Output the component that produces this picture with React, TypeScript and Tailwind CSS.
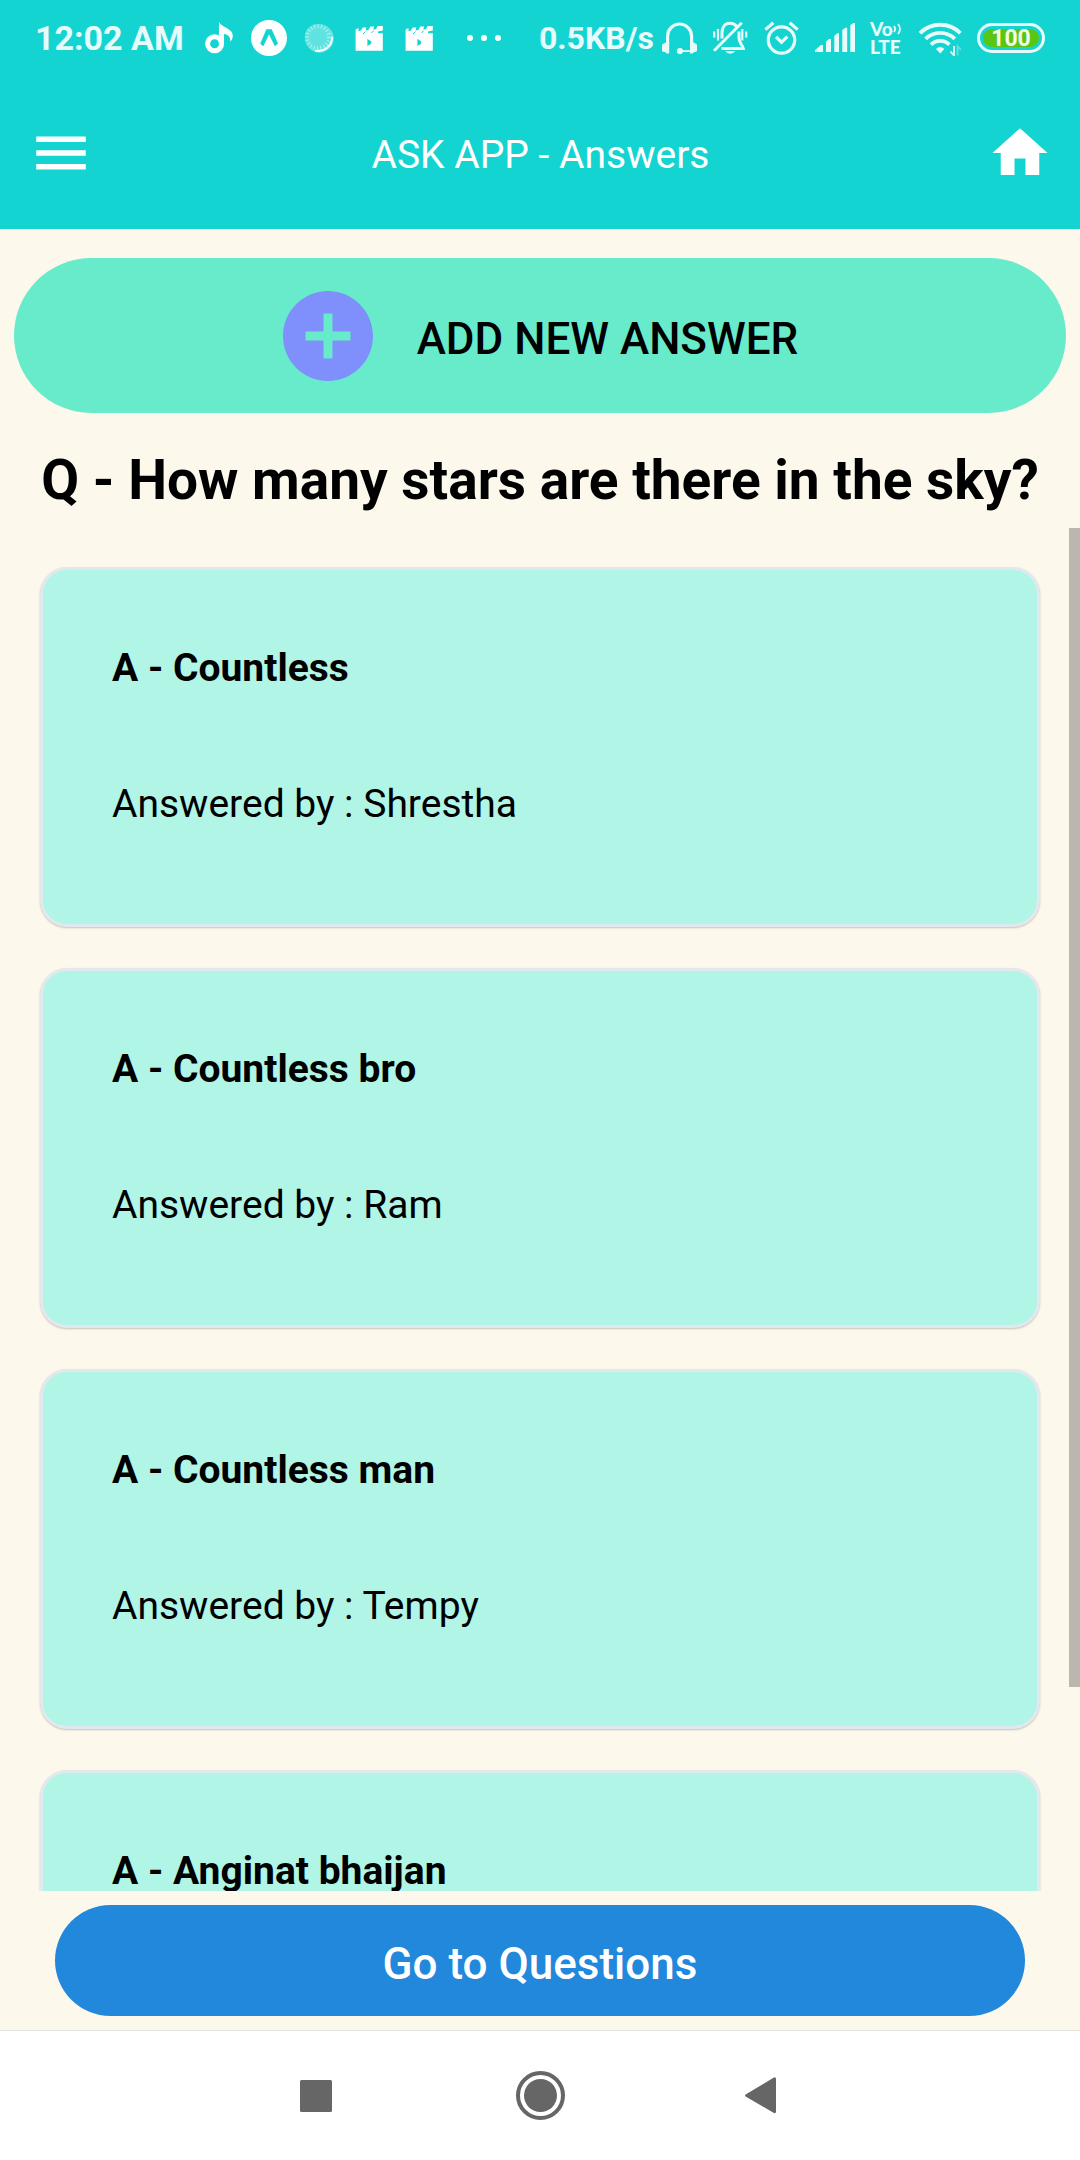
import type { ReactNode } from "react";

const answers = [
  { text: "Countless", author: "Shrestha" },
  { text: "Countless bro", author: "Ram" },
  { text: "Countless man", author: "Tempy" },
  { text: "Anginat bhaijan", author: "" },
];

function Slot({ children }: { children: ReactNode }) {
  return <span className="flex w-[50px] shrink-0 justify-center">{children}</span>;
}

function MusicNote() {
  return (
    <svg width="30" height="36" viewBox="204 20 30 36" fill="#fff" aria-hidden="true">
      <circle cx="214.6" cy="43.8" r="7" fill="none" stroke="#fff" strokeWidth="5" />
      <path d="M219 22C222 28 233 28 232.8 36C232.7 38.5 231.8 40.3 230.4 41.6C230.6 36.5 227.5 34.2 224 34V44H218.8Z" />
    </svg>
  );
}

function ExpoBadge() {
  return (
    <svg width="36" height="36" viewBox="251 20 36 36" aria-hidden="true">
      <circle cx="269" cy="38" r="18" fill="#fff" />
      <path d="M266.4 29.3H271.7L278 43.4L274.9 46.2L269 34.5L263.3 46.2L260.2 43.8Z" fill="#14d4d2" />
    </svg>
  );
}

function Moon() {
  return (
    <svg width="32" height="32" viewBox="303 22 32 32" aria-hidden="true">
      <circle cx="319.5" cy="38.5" r="14.2" fill="#fff" fillOpacity="0.4" />
      <circle cx="318" cy="37.2" r="13.2" fill="#5fe3e1" />
      <circle cx="318" cy="37.2" r="11" fill="none" stroke="#a4eeed" strokeWidth="4" strokeDasharray="1.2 2.2" />
      <path d="M332.2 37A14 14 0 0 1 315 50.6" fill="none" stroke="#fff" strokeWidth="1.8" />
    </svg>
  );
}

function Clapper() {
  return (
    <svg width="28" height="28" viewBox="355 24 28 28" aria-hidden="true">
      <path
        fill="#fff"
        fillRule="evenodd"
        d="M355.6 50.7V29.5L358.5 28V31.2L361 30.5L362.5 27.5H366.3L365.6 30.6L368.4 30L370.3 26.5H374L373.4 29.6L376 29.2L377.6 26H382.8V30.6L378 31.4V33.2H382.8V50.7ZM367.4 39V46L371.2 43.8V41.2Z"
      />
      <path d="M363 34L365.5 31.6M371.5 33L373.6 30.6" stroke="#14d4d2" strokeWidth="1" />
    </svg>
  );
}

function Headset() {
  return (
    <svg width="36" height="36" viewBox="663 20 36 36" fill="#e7fbfa" aria-hidden="true">
      <path d="M668.6 45V36a12 12 0 0 1 24 0V45" fill="none" stroke="#e7fbfa" strokeWidth="3.2" />
      <path d="M666.5 42.5H670.2V53.6H667.5L666 52H664.6Q663 52 663 50V45.5Q663 43.5 665 43.5ZM694.6 42.5H691V53.6H693.6L695.2 52H696.5Q698 52 698 50V45.5Q698 43.5 696.2 43.5Z" />
      <circle cx="681" cy="51" r="3.1" />
      <path d="M681 50.2H692V52H681Z" />
    </svg>
  );
}

function MutedBell() {
  return (
    <svg width="36" height="36" viewBox="714 20 36 36" fill="none" stroke="#e7fbfa" strokeWidth="3" aria-hidden="true">
      <path d="M723 38.5V33C723 27 726 23.3 731 23.3C734 23.3 736.4 24.6 737.8 26.6M740 31.5V38C740 42.5 743.5 45 744.3 48.6H722.5" />
      <path d="M715 50.8L742.8 22.8" />
      <path d="M715.2 31.5V37.5M719 29V40.5M743.3 29V40.5M747.2 31.5V37.5" strokeWidth="2.2" />
      <path d="M726 51H736.5Q731 56.5 726 51Z" fill="#e7fbfa" stroke="none" />
    </svg>
  );
}

function Alarm() {
  return (
    <svg width="36" height="36" viewBox="764.5 20 36 36" fill="none" stroke="#e7fbfa" strokeWidth="3.2" aria-hidden="true">
      <circle cx="782" cy="40" r="13.2" />
      <path d="M776.6 36.8L782 42.2L787.8 36.6M765.8 29.6L773.8 22.8M790.2 22.8L798.2 29.6" />
    </svg>
  );
}

function Signal() {
  return (
    <svg width="40" height="36" viewBox="815 20 40 36" fill="#e7fbfa" aria-hidden="true">
      <path d="M815 52V50L821 45H823V52ZM826 52V41.5L829 39H831V52ZM834.3 52V35.7L837.3 33.2H839V52ZM842.3 52V30L845.3 27.8H847.2V52ZM850.3 52V25.2L853.3 23H855V52Z" />
    </svg>
  );
}

function VoLte() {
  return (
    <span className="flex w-[34px] flex-col font-['Lato',sans-serif] text-[19px] leading-[18px] font-black whitespace-nowrap text-[#e7fbfa]">
      <span className="flex items-center">
        Vo
        <svg width="9" height="12" viewBox="0 0 9 12" fill="none" stroke="#e7fbfa" strokeWidth="1.8" aria-hidden="true">
          <path d="M1 3Q3.2 6 1 9M5 1Q9 6 5 11" />
        </svg>
      </span>
      <span>LTE</span>
    </span>
  );
}

function Wifi() {
  return (
    <svg width="43" height="36" viewBox="919 20 43 36" fill="none" stroke="#e7fbfa" strokeWidth="3.8" aria-hidden="true">
      <path d="M920 33.2A28.4 28.4 0 0 1 960.4 33.2M925.6 38.9A20.6 20.6 0 0 1 954.8 38.9M931 44.6A13 13 0 0 1 949.4 44.6" />
      <path d="M936 49Q940 45 944.4 49L940.2 53.4Z" fill="#e7fbfa" stroke="none" />
      <path d="M954 46V55.5L950.5 51.5" strokeWidth="1.8" />
      <path d="M957.6 55.5V46L961 50" strokeWidth="1.8" strokeOpacity="0.35" />
    </svg>
  );
}

function Battery() {
  return (
    <span className="flex h-[30px] w-[68px] rounded-full border-[3px] border-[#e7fbfa] p-[3px]">
      <span className="flex flex-1 items-center justify-center rounded-full bg-[#5ac513] text-[23px] leading-none font-bold text-[#f2fbe8]">
        100
      </span>
    </span>
  );
}

function StatusBar() {
  return (
    <div className="flex h-[76px] items-center px-[35px]">
      <span className="w-[159px] text-[34px] leading-10 font-bold whitespace-nowrap text-[#e7fbfa]">12:02 AM</span>
      <Slot><MusicNote /></Slot>
      <Slot><ExpoBadge /></Slot>
      <Slot><Moon /></Slot>
      <Slot><Clapper /></Slot>
      <Slot><Clapper /></Slot>
      <span className="ml-[23px] flex gap-2">
        <i className="size-1.5 rounded-full bg-white" />
        <i className="size-1.5 rounded-full bg-white" />
        <i className="size-1.5 rounded-full bg-white" />
      </span>
      <div className="ml-auto flex items-center gap-[15px]">
        <span className="flex items-center gap-2">
          <span className="text-[32px] leading-10 font-bold text-[#e7fbfa]">0.5KB/s</span>
          <Headset />
        </span>
        <MutedBell />
        <Alarm />
        <Signal />
        <VoLte />
        <Wifi />
        <Battery />
      </div>
    </div>
  );
}

function AnswerCard({ text, author }: { text: string; author: string }) {
  return (
    <li className="flex h-[360px] shrink-0 flex-col gap-[90px] rounded-[27px] border-[3px] border-[#e1e8ee] bg-[#b0f5e6] px-[69px] pt-[75px] shadow-[0_1px_2px_rgba(0,0,0,0.22)]">
      <h2 className="text-[39px] leading-[46px] font-bold">A - {text}</h2>
      {author && <p className="text-[39px] leading-[46px]">Answered by : {author}</p>}
    </li>
  );
}

export default function App() {
  return (
    <div className="flex h-screen flex-col bg-[#fcf8eb] font-['Roboto',sans-serif] text-black">
      <header className="shrink-0 bg-[#14d4d2] text-white">
        <StatusBar />
        <div className="flex h-[153px] items-center justify-between pr-[27px] pl-7">
          <button type="button" aria-label="Open menu">
            <svg className="size-[66px]" viewBox="0 0 24 24" fill="currentColor" aria-hidden="true">
              <path d="M3 18h18v-2H3v2zm0-5h18v-2H3v2zm0-7v2h18V6H3z" />
            </svg>
          </button>
          <h1 className="pt-1 text-[39px] leading-[46px]">ASK APP - Answers</h1>
          <button type="button" aria-label="Home">
            <svg className="size-[66px]" viewBox="0 0 24 24" fill="currentColor" aria-hidden="true">
              <path d="M10 20v-6h4v6h5v-8h3L12 3 2 12h3v8z" />
            </svg>
          </button>
        </div>
      </header>

      <main className="flex min-h-0 flex-1 flex-col">
        <button
          type="button"
          className="mx-3.5 mt-[29px] flex h-[155px] shrink-0 items-center justify-center gap-[35px] rounded-full bg-[#67ebcb] pr-2 text-[44px] font-medium"
        >
          <svg className="size-[108px]" viewBox="0 0 24 24" fill="#7f8ffb" aria-hidden="true">
            <path d="M12 2C6.48 2 2 6.48 2 12s4.48 10 10 10 10-4.48 10-10S17.52 2 12 2zm5 11h-4v4h-2v-4H7v-2h4V7h2v4h4v2z" />
          </svg>
          <span className="pt-1.5">ADD NEW ANSWER</span>
        </button>
        <p className="mt-8 shrink-0 text-center text-[55px] leading-[70px] font-bold whitespace-nowrap">
          Q - How many stars are there in the sky?
        </p>
        <div className="relative mt-[13px] min-h-0 flex-1 overflow-hidden">
          <ul className="flex flex-col gap-[41px] px-10 pt-[39px]">
            {answers.map((answer) => (
              <AnswerCard key={answer.text} text={answer.text} author={answer.author} />
            ))}
          </ul>
          <div className="absolute top-0 right-0 h-[85%] w-[11px] bg-[#bbb7af]" />
        </div>
        <button
          type="button"
          className="mx-[55px] my-3.5 h-[111px] shrink-0 rounded-full bg-[#2288dc] pt-1.5 text-[44px] font-medium text-white"
        >
          Go to Questions
        </button>
      </main>

      <nav className="flex h-[130px] shrink-0 items-center justify-center gap-[174px] border-t border-[#e1e3e1] bg-white text-[#666]">
        <button type="button" aria-label="Recent apps">
          <svg width="50" height="50" viewBox="0 0 50 50" fill="currentColor" aria-hidden="true">
            <rect x="9" y="9" width="32" height="32" rx="1.5" />
          </svg>
        </button>
        <button type="button" aria-label="Home screen">
          <svg width="50" height="50" viewBox="0 0 50 50" fill="currentColor" aria-hidden="true">
            <circle cx="25.5" cy="24.5" r="22.5" fill="none" stroke="currentColor" strokeWidth="4" />
            <circle cx="25.5" cy="24.5" r="16.5" />
          </svg>
        </button>
        <button type="button" aria-label="Back">
          <svg width="50" height="50" viewBox="0 0 50 50" fill="currentColor" aria-hidden="true">
            <path d="M7 23.3L34.5 6.7Q37 5.5 37 8V40.5Q37 43 34.5 41.8L7 25.7Q5 24.5 7 23.3Z" />
          </svg>
        </button>
      </nav>
    </div>
  );
}
